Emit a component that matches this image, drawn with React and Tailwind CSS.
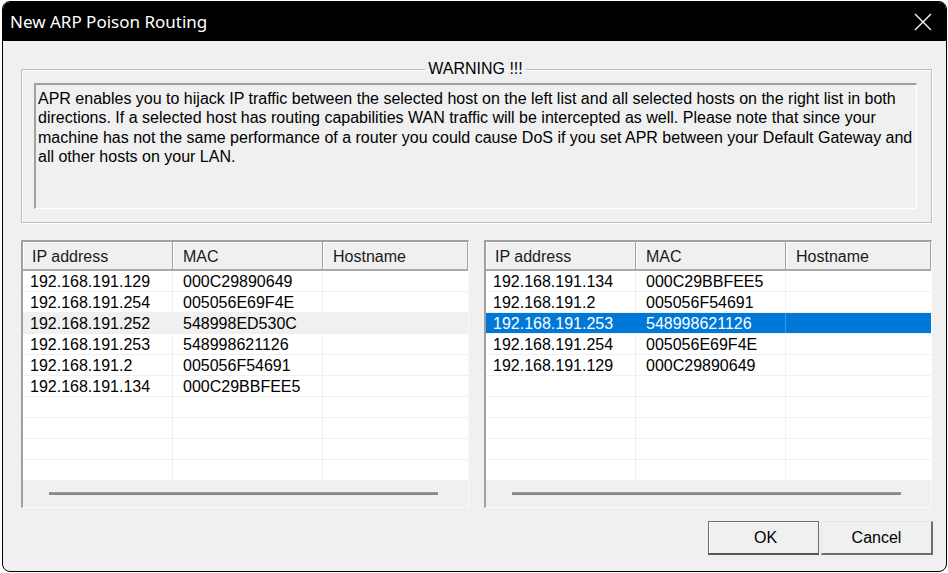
import React from "react";

const leftRows = [
  ["192.168.191.129", "000C29890649"],
  ["192.168.191.254", "005056E69F4E"],
  ["192.168.191.252", "548998ED530C"],
  ["192.168.191.253", "548998621126"],
  ["192.168.191.2", "005056F54691"],
  ["192.168.191.134", "000C29BBFEE5"],
];
const rightRows = [
  ["192.168.191.134", "000C29BBFEE5"],
  ["192.168.191.2", "005056F54691"],
  ["192.168.191.253", "548998621126"],
  ["192.168.191.254", "005056E69F4E"],
  ["192.168.191.129", "000C29890649"],
];

function HostList({ rows, sel, active }) {
  const all = [...rows];
  while (all.length < 10) all.push(["", ""]);
  return (
    <div className="w-[448px] h-[268px] flex flex-col border-t-2 border-l-2 border-r border-b border-t-[#a0a0a0] border-l-[#a0a0a0] border-r-[#fbfbfb] border-b-[#fbfbfb] bg-white">
      <div className="flex h-[29px] bg-[#f0f0f0] border-b-2 border-b-[#a8a8a8] text-[16px] text-[#1a1a1a]">
        <div className="w-[150px] flex items-center pt-[2px] pl-[9px] border-r border-r-[#a0a0a0] shadow-[inset_1px_1px_0_#ffffff]">IP address</div>
        <div className="w-[150px] flex items-center pt-[2px] pl-[10px] border-r border-r-[#a0a0a0] shadow-[inset_1px_1px_0_#ffffff]">MAC</div>
        <div className="flex-1 flex items-center pt-[2px] pl-[10px] border-r border-r-[#a0a0a0] shadow-[inset_1px_1px_0_#ffffff]">Hostname</div>
      </div>
      {all.map((r, i) => {
        const isSel = i === sel;
        const rowCls = isSel
          ? active
            ? "bg-[#0078d7] text-white"
            : "bg-[#f0f0f0] text-black"
          : "bg-white text-black";
        return (
          <div key={i} className={"flex h-[21px] shrink-0 border-b border-b-[#f0f0f0] text-[16px] leading-[20px] " + rowCls}>
            <div className={"w-[150px] pl-[7px] pt-[1px] border-r " + (isSel && active ? "border-r-[#0078d7]" : "border-r-[#f0f0f0]")}>{r[0]}</div>
            <div className={"w-[150px] pl-[10px] pt-[1px] border-r " + (isSel && active ? "border-r-[#3d97e0]" : "border-r-[#f0f0f0]")}>{r[1]}</div>
            <div className="flex-1"></div>
          </div>
        );
      })}
      <div className="flex-1 bg-[#f0f0f0] pl-[26px] pr-[30px] pt-[11px]">
        <div className="h-[3px] bg-[#888888] border-t border-t-[#9a9a9a]"></div>
      </div>
    </div>
  );
}

export default function App() {
  return (
    <div className="w-[948px] h-[573px] bg-white pt-[1px] pl-[2px]" style={{ fontFamily: '"Liberation Sans", Arial, sans-serif' }}>
      <div className="w-[945px] h-[571px] border border-black rounded-[8px] overflow-hidden flex flex-col bg-[#f0f0f0]">
        <div className="h-[39px] bg-black flex items-center justify-between pl-[7px] pr-[14px] shrink-0">
          <span className="text-white text-[17px]" style={{ fontFamily: '"Noto Sans", "Open Sans", sans-serif' }}>New ARP Poison Routing</span>
          <svg width="18" height="18" viewBox="0 0 18 18">
            <path d="M1 1 L17 17 M17 1 L1 17" stroke="white" strokeWidth="1.3" fill="none" />
          </svg>
        </div>
        <div className="flex-1 flex flex-col pl-[18px] pr-[13px] pt-[19px]">
          <fieldset className="w-[911px] h-[163px] border border-[#bcbcbc] shadow-[inset_1px_1px_0_#ffffff,1px_1px_0_#ffffff] pl-[12px] pr-[14px] pb-[13px]">
            <legend className="mx-auto px-[3px] text-[16px] leading-[18px] text-black">WARNING !!!</legend>
            <div className="mt-[5px] h-[126px] border-t-2 border-l-2 border-r border-b border-t-[#a0a0a0] border-l-[#a0a0a0] border-r-white border-b-white pt-[4px] pl-[2px] text-[16px] leading-[19.3px] text-black whitespace-nowrap">
              APR enables you to hijack IP traffic between the selected host on the left list and all selected hosts on the right list in both<br />
              directions. If a selected host has routing capabilities WAN traffic will be intercepted as well. Please note that since your<br />
              machine has not the same performance of a router you could cause DoS if you set APR between your Default Gateway and<br />
              all other hosts on your LAN.
            </div>
          </fieldset>
          <div className="flex gap-[15px] mt-[17px]">
            <HostList rows={leftRows} sel={2} active={false} />
            <HostList rows={rightRows} sel={2} active={true} />
          </div>
          <div className="flex justify-end gap-[2px] mt-[13px]">
            <button className="w-[111px] h-[34px] bg-[#f0f0f0] border border-[#6e6e6e] border-b-2 border-b-[#555555] shadow-[inset_1px_1px_0_#ffffff] text-[16px] text-black pl-[4px]">OK</button>
            <button className="w-[112px] h-[34px] bg-[#f0f0f0] border-t border-l border-t-[#e6e6e6] border-l-[#e6e6e6] border-r-2 border-b-2 border-r-[#6e6e6e] border-b-[#6e6e6e] text-[16px] text-black">Cancel</button>
          </div>
        </div>
      </div>
    </div>
  );
}
